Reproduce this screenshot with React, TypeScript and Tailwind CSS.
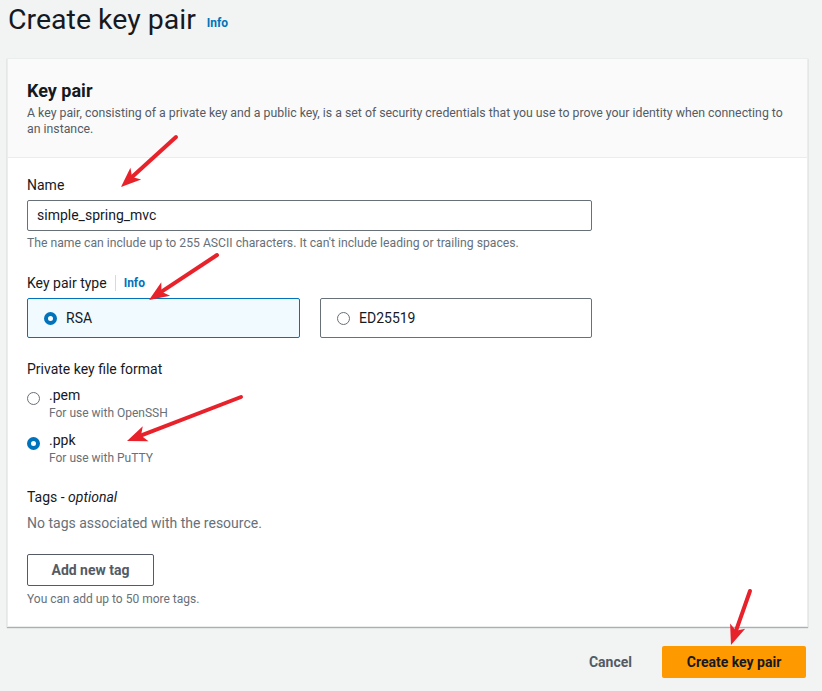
import React from 'react';

type Arrow = { x1: number; y1: number; x2: number; y2: number };

const ARROWS: Arrow[] = [
  { x1: 176, y1: 137, x2: 121, y2: 187 },
  { x1: 217, y1: 255, x2: 149, y2: 300 },
  { x1: 241, y1: 397, x2: 127, y2: 441 },
  { x1: 750, y1: 591, x2: 731, y2: 645 },
];

function RedArrow({ x1, y1, x2, y2 }: Arrow) {
  const dx = x2 - x1;
  const dy = y2 - y1;
  const len = Math.hypot(dx, dy);
  const ux = dx / len;
  const uy = dy / len;
  const headLen = 20;
  const headW = 8;
  const bx = x2 - ux * headLen;
  const by = y2 - uy * headLen;
  const pts = [
    `${x2},${y2}`,
    `${bx - uy * headW},${by + ux * headW}`,
    `${bx + ux * 5},${by + uy * 5}`,
    `${bx + uy * headW},${by - ux * headW}`,
  ].join(' ');
  return (
    <g>
      <line x1={x1} y1={y1} x2={bx + ux * 4} y2={by + uy * 4} stroke="#e8222b" strokeWidth={4} strokeLinecap="round" />
      <polygon points={pts} fill="#e8222b" />
    </g>
  );
}

function Radio({ checked }: { checked: boolean }) {
  return checked ? (
    <span className="inline-block h-[13px] w-[13px] shrink-0 rounded-full border-[4px] border-[#0073bb] bg-white" />
  ) : (
    <span className="inline-block h-[13px] w-[13px] shrink-0 rounded-full border-[1.5px] border-[#687078] bg-white" />
  );
}

export default function App() {
  return (
    <div className="relative min-h-[691px] w-[822px] overflow-hidden bg-[#f2f3f3] font-['Roboto',sans-serif] text-[#16191f]">
      <div className="flex items-end gap-[11px] pl-[8px] pt-[3px]">
        <h1 className="text-[28.5px] leading-[34px] text-[#16191f]">Create key pair</h1>
        <a className="mb-[5px] text-[12px] font-bold text-[#0073bb]">Info</a>
      </div>

      <div className="ml-[7px] mt-[21px] w-[801px] border border-[#eaeded] bg-white shadow-[0_1px_1px_0_rgba(0,28,36,0.3)]">
        <div className="border-b border-[#eaeded] bg-[#fafafa] px-[19px] pb-[20px] pt-[21px]">
          <h2 className="text-[18px] font-bold leading-[22px]">Key pair</h2>
          <p className="mt-[3px] max-w-[762px] text-[12.3px] leading-[16px] text-[#545b64]">
            A key pair, consisting of a private key and a public key, is a set of security credentials that you use to prove your identity when connecting to an instance.
          </p>
        </div>

        <div className="px-[19px] pb-[19px] pt-[17px]">
          <div className="text-[14px] leading-[20px]">Name</div>
          <div className="mt-[5px] flex h-[31px] w-[565px] items-center rounded-[2px] border border-[#687078] px-[9px] text-[14px]">
            simple_spring_mvc
          </div>
          <div className="mt-[4px] text-[12.2px] leading-[16px] text-[#687078]">
            The name can include up to 255 ASCII characters. It can't include leading or trailing spaces.
          </div>

          <div className="mt-[22px] flex items-center text-[14px] leading-[20px]">
            <span>Key pair type</span>
            <span className="mx-[8px] h-[16px] w-px bg-[#d5dbdb]" />
            <span className="text-[12px] font-bold text-[#0073bb]">Info</span>
          </div>
          <div className="mt-[5px] flex gap-[20px]">
            <div className="flex h-[40px] w-[273px] items-center gap-[9px] rounded-[2px] border border-[#0073bb] bg-[#f1faff] px-[16px] text-[14px]">
              <Radio checked />
              <span>RSA</span>
            </div>
            <div className="flex h-[40px] w-[272px] items-center gap-[9px] rounded-[2px] border border-[#687078] bg-white px-[16px] text-[14px]">
              <Radio checked={false} />
              <span>ED25519</span>
            </div>
          </div>

          <div className="mt-[21px] text-[14px] leading-[20px]">Private key file format</div>
          <div className="mt-[6px] flex gap-[9px]">
            <div className="pt-[3px]"><Radio checked={false} /></div>
            <div>
              <div className="text-[14px] leading-[20px]">.pem</div>
              <div className="text-[12px] leading-[16px] text-[#687078]">For use with OpenSSH</div>
            </div>
          </div>
          <div className="mt-[9px] flex gap-[9px]">
            <div className="pt-[3px]"><Radio checked /></div>
            <div>
              <div className="text-[14px] leading-[20px]">.ppk</div>
              <div className="text-[12px] leading-[16px] text-[#687078]">For use with PuTTY</div>
            </div>
          </div>

          <div className="mt-[21px] text-[14px] leading-[20px]">
            Tags - <i>optional</i>
          </div>
          <div className="mt-[6px] text-[14px] leading-[20px] text-[#687078]">No tags associated with the resource.</div>
          <button className="mt-[21px] h-[32px] w-[127px] rounded-[2px] border border-[#545b64] bg-white text-[14px] font-bold text-[#545b64]">
            Add new tag
          </button>
          <div className="mt-[5px] text-[12px] leading-[16px] text-[#687078]">You can add up to 50 more tags.</div>
        </div>
      </div>

      <div className="mt-[19px] flex items-center justify-end gap-[30px] pr-[16px]">
        <button className="text-[14px] font-bold text-[#545b64]">Cancel</button>
        <button className="h-[32px] w-[144px] rounded-[2px] bg-[#ff9900] text-[14px] font-bold text-[#16191f]">
          Create key pair
        </button>
      </div>

      <svg className="pointer-events-none absolute left-0 top-0" width={822} height={691}>
        {ARROWS.map((a, i) => (
          <RedArrow key={i} {...a} />
        ))}
      </svg>
    </div>
  );
}
